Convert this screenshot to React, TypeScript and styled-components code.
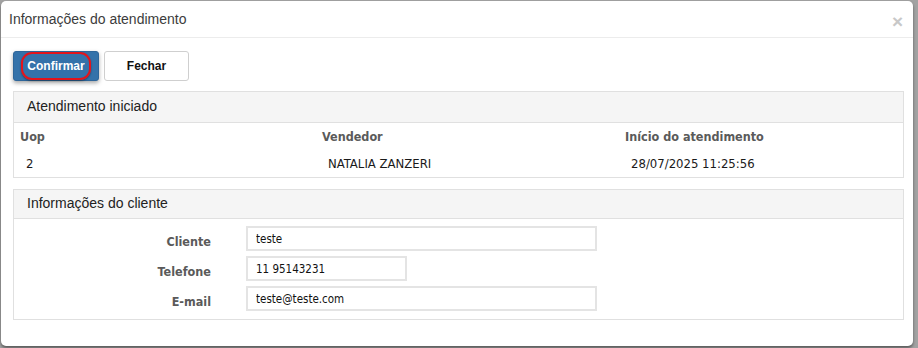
import React from "react";
import styled, { createGlobalStyle } from "styled-components";

const Global = createGlobalStyle`
  html, body { margin: 0; padding: 0; }
  body {
    background: #a2a2a2;
    font-family: "Liberation Sans", Arial, sans-serif;
    width: 918px;
    height: 348px;
    overflow: hidden;
  }
`;

const Modal = styled.div`
  margin: 1px 0 0 1px;
  width: 912px;
  height: 345px;
  background: #fff;
  border-radius: 5px;
  box-shadow: 0 2px 3px rgba(0, 0, 0, 0.45);
  display: flex;
  flex-direction: column;
  overflow: hidden;
`;

const Header = styled.div`
  height: 36px;
  border-bottom: 1px solid #ececec;
  display: flex;
  align-items: center;
  justify-content: space-between;
  padding: 0 10px 0 8px;
`;

const Title = styled.h4`
  margin: 0;
  font-size: 14px;
  font-weight: normal;
  color: #3c3c3c;
  font-family: "Liberation Sans", Arial, sans-serif;
`;

const Close = styled.span`
  font-size: 19px;
  font-weight: bold;
  color: #c8c8c8;
  line-height: 1;
  margin-top: 4px;
  font-family: "Liberation Sans", Arial, sans-serif;
`;

const Body = styled.div`
  padding: 13px 9px 0 12px;
  display: flex;
  flex-direction: column;
`;

const Toolbar = styled.div`
  display: flex;
  gap: 5px;
  margin-bottom: 10px;
`;

const Button = styled.button<{ $primary?: boolean }>`
  height: 30px;
  width: ${(p) => (p.$primary ? "86px" : "85px")};
  border-radius: 3px;
  font-family: "Liberation Sans", Arial, sans-serif;
  font-weight: bold;
  font-size: 12px;
  display: flex;
  align-items: center;
  justify-content: center;
  padding: 0;
  cursor: pointer;
  background: ${(p) => (p.$primary ? "#3472aa" : "#fff")};
  color: ${(p) => (p.$primary ? "#fff" : "#111")};
  border: 1px solid ${(p) => (p.$primary ? "#2e669a" : "#cfcfcf")};
  box-shadow: ${(p) => (p.$primary ? "0 2px 4px rgba(0,0,0,0.35)" : "none")};
`;

const Ring = styled.span`
  border: 2px solid #e4141b;
  border-radius: 11px;
  padding: 5px 4px;
  box-shadow: 0 1px 2px rgba(0, 0, 0, 0.4);
`;

const Panel = styled.div<{ $gap?: number }>`
  border: 1px solid #e0e0e0;
  margin-bottom: ${(p) => p.$gap ?? 0}px;
  background: #fff;
`;

const PanelHeading = styled.div<{ $h: number }>`
  box-sizing: border-box;
  height: ${(p) => p.$h}px;
  background: #f5f5f5;
  border-bottom: 1px solid #e0e0e0;
  display: flex;
  align-items: center;
  padding: 0 0 2px 13px;
  font-size: 14px;
  color: #222;
  font-family: "Liberation Sans", Arial, sans-serif;
`;

const Table = styled.div`
  display: grid;
  grid-template-columns: 302px 303px 1fr;
  padding: 0 0 0 6px;
  font-family: "DejaVu Sans Condensed", "DejaVu Sans", sans-serif;
`;

const Th = styled.div`
  height: 27px;
  display: flex;
  align-items: center;
  font-size: 12.5px;
  font-weight: bold;
  color: #5a5a5a;
`;

const Td = styled.div`
  height: 27px;
  display: flex;
  align-items: center;
  padding-left: 6px;
  font-size: 13px;
  color: #1a1a1a;
`;

const Form = styled.div`
  display: grid;
  grid-template-columns: 197px 1fr;
  column-gap: 35px;
  row-gap: 5px;
  padding: 7px 0 8px;
  align-items: center;
`;

const Label = styled.label`
  text-align: right;
  font-family: "DejaVu Sans Condensed", "DejaVu Sans", sans-serif;
  font-size: 12.5px;
  font-weight: bold;
  color: #5a5a5a;
  padding-top: 6px;
`;

const Input = styled.input<{ $w: number }>`
  box-sizing: border-box;
  width: ${(p) => p.$w}px;
  height: 25px;
  border: 2px solid #e4e4e4;
  padding: 0 8px;
  font-family: "DejaVu Sans Condensed", "DejaVu Sans", sans-serif;
  font-size: 11.5px;
  color: #111;
  outline: none;
  background: #fff;
`;

export default function App() {
  return (
    <>
      <Global />
      <Modal>
        <Header>
          <Title>Informações do atendimento</Title>
          <Close>×</Close>
        </Header>
        <Body>
          <Toolbar>
            <Button $primary>
              <Ring>Confirmar</Ring>
            </Button>
            <Button>Fechar</Button>
          </Toolbar>
          <Panel $gap={11}>
            <PanelHeading $h={31}>Atendimento iniciado</PanelHeading>
            <Table>
              <Th>Uop</Th>
              <Th>Vendedor</Th>
              <Th>Início do atendimento</Th>
              <Td>2</Td>
              <Td>NATALIA ZANZERI</Td>
              <Td>28/07/2025 11:25:56</Td>
            </Table>
          </Panel>
          <Panel>
            <PanelHeading $h={29}>Informações do cliente</PanelHeading>
            <Form>
              <Label>Cliente</Label>
              <Input $w={351} defaultValue="teste" />
              <Label>Telefone</Label>
              <Input $w={161} defaultValue="11 95143231" />
              <Label>E-mail</Label>
              <Input $w={351} defaultValue="teste@teste.com" />
            </Form>
          </Panel>
        </Body>
      </Modal>
    </>
  );
}
